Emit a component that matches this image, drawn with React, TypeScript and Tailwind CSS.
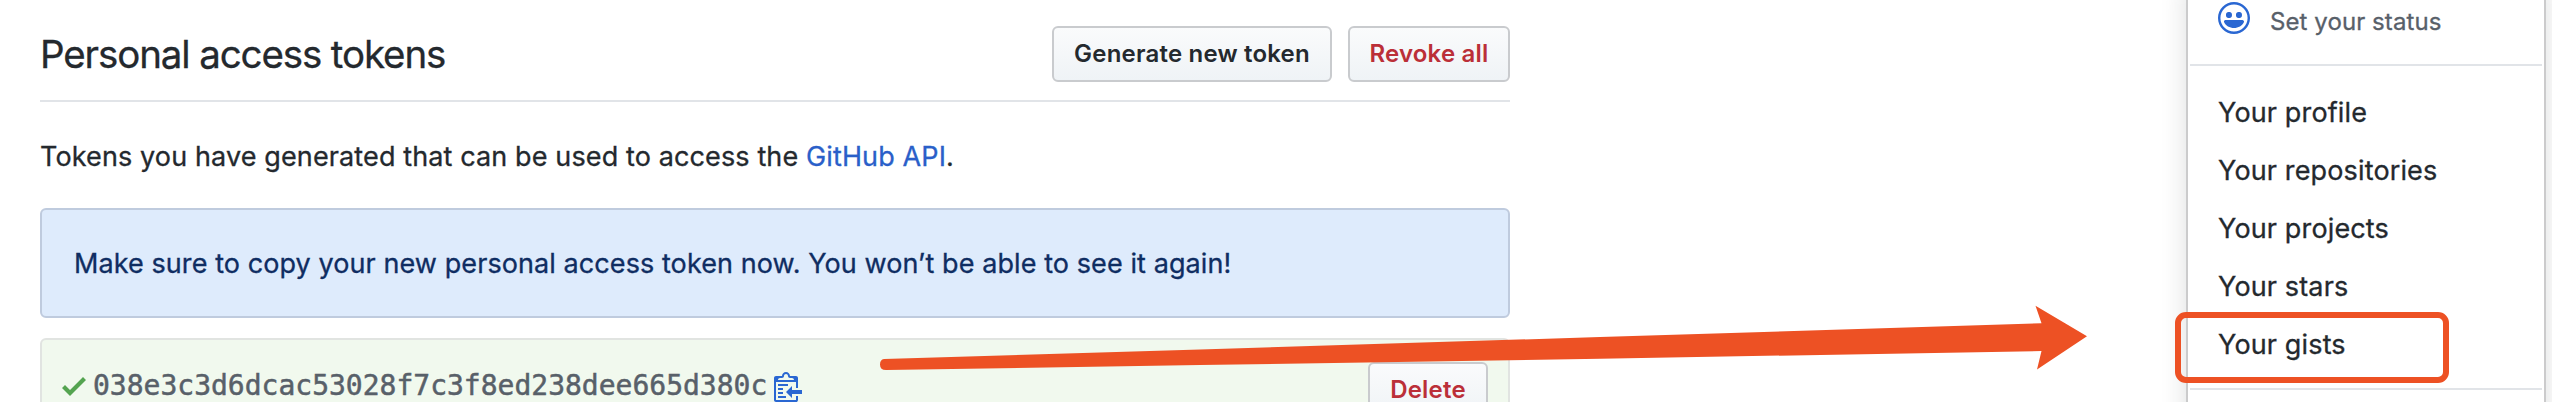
import type { ReactNode } from "react";

const MENU_ITEMS = [
  "Your profile",
  "Your repositories",
  "Your projects",
  "Your stars",
  "Your gists",
];

function CheckIcon() {
  return (
    <svg className="h-8 w-6 shrink-0 fill-[#54a450]" viewBox="0 0 12 16">
      <path fillRule="evenodd" d="M12 5l-8 8-4-4 1.5-1.5L4 10l6.5-6.5L12 5z" />
    </svg>
  );
}

function ClippyIcon() {
  return (
    <svg className="h-8 w-7 shrink-0 fill-[#2a67d2]" viewBox="0 0 14 16">
      <path
        fillRule="evenodd"
        d="M2 13h4v1H2v-1zm5-6H2v1h5V7zm2 3V8l-3 3 3 3v-2h5v-2H9zM4.5 9H2v1h2.5V9zM2 12h2.5v-1H2v1zm9 1h1v2c-.02.28-.11.52-.3.7-.19.18-.42.28-.7.3H1c-.55 0-1-.45-1-1V4c0-.55.45-1 1-1h3c0-1.11.89-2 2-2 1.11 0 2 .89 2 2h3c.55 0 1 .45 1 1v5h-1V6H1v9h10v-2zM2 5h8c0-.55-.45-1-1-1H8c-.55 0-1-.45-1-1s-.45-1-1-1-1 .45-1 1-.45 1-1 1H3c-.55 0-1 .45-1 1z"
      />
    </svg>
  );
}

function SmileyIcon() {
  return (
    <svg className="h-8 w-8 shrink-0 fill-[#2a67d2]" viewBox="0 0 16 16">
      <path
        fillRule="evenodd"
        d="M8 0C3.58 0 0 3.58 0 8s3.58 8 8 8 8-3.58 8-8-3.58-8-8-8zm4.81 12.81a6.72 6.72 0 0 1-2.17 1.45c-.83.36-1.72.53-2.64.53-.92 0-1.81-.17-2.64-.53-.81-.34-1.55-.83-2.17-1.45a6.773 6.773 0 0 1-1.45-2.17A6.59 6.59 0 0 1 1.21 8c0-.92.17-1.81.53-2.64.34-.81.83-1.55 1.45-2.17.62-.62 1.36-1.11 2.17-1.45A6.59 6.59 0 0 1 8 1.21c.92 0 1.81.17 2.64.53.81.34 1.55.83 2.17 1.45.62.62 1.11 1.36 1.45 2.17.36.83.53 1.72.53 2.64 0 .92-.17 1.81-.53 2.64-.34.81-.83 1.55-1.45 2.17zM4 6.8v-.59c0-.66.53-1.19 1.2-1.19h.59c.66 0 1.19.53 1.19 1.19v.59c0 .67-.53 1.2-1.19 1.2H5.2C4.53 8 4 7.47 4 6.8zm5 0v-.59c0-.66.53-1.19 1.2-1.19h.59c.66 0 1.19.53 1.19 1.19v.59c0 .67-.53 1.2-1.19 1.2h-.59C9.53 8 9 7.47 9 6.8zm4 3.2c-.72 1.88-2.91 3-5 3s-4.28-1.13-5-3c-.14-.39.23-1 .66-1h8.59c.41 0 .89.61.75 1z"
      />
    </svg>
  );
}

function Button({ children, className }: { children: ReactNode; className: string }) {
  return (
    <button
      className={`h-14 shrink-0 whitespace-nowrap rounded-md border-2 border-[#c9cbce] bg-linear-to-b from-[#fafbfc] to-[#eff3f6] text-center text-[24px] font-semibold leading-[52px] tracking-[0.2px] ${className}`}
    >
      {children}
    </button>
  );
}

export default function App() {
  return (
    <div className="relative flex h-[402px] w-[2552px] justify-between overflow-hidden bg-white font-['Inter',sans-serif] text-[27px] text-[#24292e]">
      <main className="ml-10 w-[1470px] shrink-0">
        <header className="flex h-[102px] items-start border-b-2 border-[#e1e4e8] pt-[26px]">
          <h2 className="flex-1 text-[38.5px] leading-[56px] tracking-[-1.12px] [-webkit-text-stroke:0.3px]">
            Personal access tokens
          </h2>
          <Button className="mr-4 w-[280px]">Generate new token</Button>
          <Button className="w-[162px] text-[#bb2f38]">Revoke all</Button>
        </header>

        <p className="mt-[34px] h-[42px] whitespace-nowrap leading-[42px] tracking-[0.12px] [-webkit-text-stroke:0.3px]">
          Tokens you have generated that can be used to access the{" "}
          <a className="text-[#2a5fc9]">GitHub API</a>.
        </p>

        <div className="mt-[30px] flex h-[110px] items-center whitespace-nowrap rounded-md border-2 border-[#bfcbde] bg-[#deebfc] pl-8 pt-0.5 tracking-[0.08px] text-[#0f2d62] [-webkit-text-stroke:0.3px]">
          Make sure to copy your new personal access token now. You won’t be able to see it again!
        </div>

        <div className="mt-5 flex h-[110px] items-start rounded-md border-2 border-[#e1e4e1] bg-[#f1f9ee] pl-5 pr-5 pt-[22px]">
          <div className="flex flex-1 items-center pt-[8px]">
            <CheckIcon />
            <code className="ml-[7px] font-['DejaVu_Sans_Mono',monospace] text-[28px] leading-8 text-[#586069] [-webkit-text-stroke:0.5px]">
              038e3c3d6dcac53028f7c3f8ed238dee665d380c
            </code>
            <span className="ml-[7px]">
              <ClippyIcon />
            </span>
          </div>
          <Button className="w-[120px] text-[#bb2f38]">Delete</Button>
        </div>
      </main>

      <aside className="-mt-5 mr-1.5 h-[460px] w-[360px] shrink-0 border-2 border-[#cbcbcc] bg-white px-0.5 shadow-[0_6px_24px_rgba(27,31,35,0.15)]">
        <div className="flex h-[84px] items-start border-b-2 border-[#e1e4e8] pl-7 pt-5">
          <SmileyIcon />
          <span className="ml-5 text-[24px] leading-[39px] tracking-[0.08px] text-[#586069] [-webkit-text-stroke:0.3px]">
            Set your status
          </span>
        </div>
        <ul className="h-[324px] border-b-2 border-[#e1e4e8] pt-[18px]">
          {MENU_ITEMS.map((item) => (
            <li
              key={item}
              className="h-[58px] whitespace-nowrap pl-7 leading-[58px] tracking-[0.14px] [-webkit-text-stroke:0.3px]"
            >
              {item}
            </li>
          ))}
        </ul>
      </aside>

      {/* annotation: highlighted entry and the arrow pointing at it */}
      <div className="absolute left-[2175px] top-[312px] h-[71px] w-[274px] rounded-[11px] border-6 border-[#ed5124]" />
      <svg className="absolute left-0 top-0 h-[402px] w-[2552px] fill-[#ed5124]" viewBox="0 0 2552 402">
        <path d="M884 359L1200 349.5L1600 337L2041.5 323.3L2035.5 305.7L2087 336.3L2037 369.5L2041.5 351L1600 358.8L1200 365L886 370Q880 370 880 364.5Q880 359.5 884 359Z" />
      </svg>
    </div>
  );
}
